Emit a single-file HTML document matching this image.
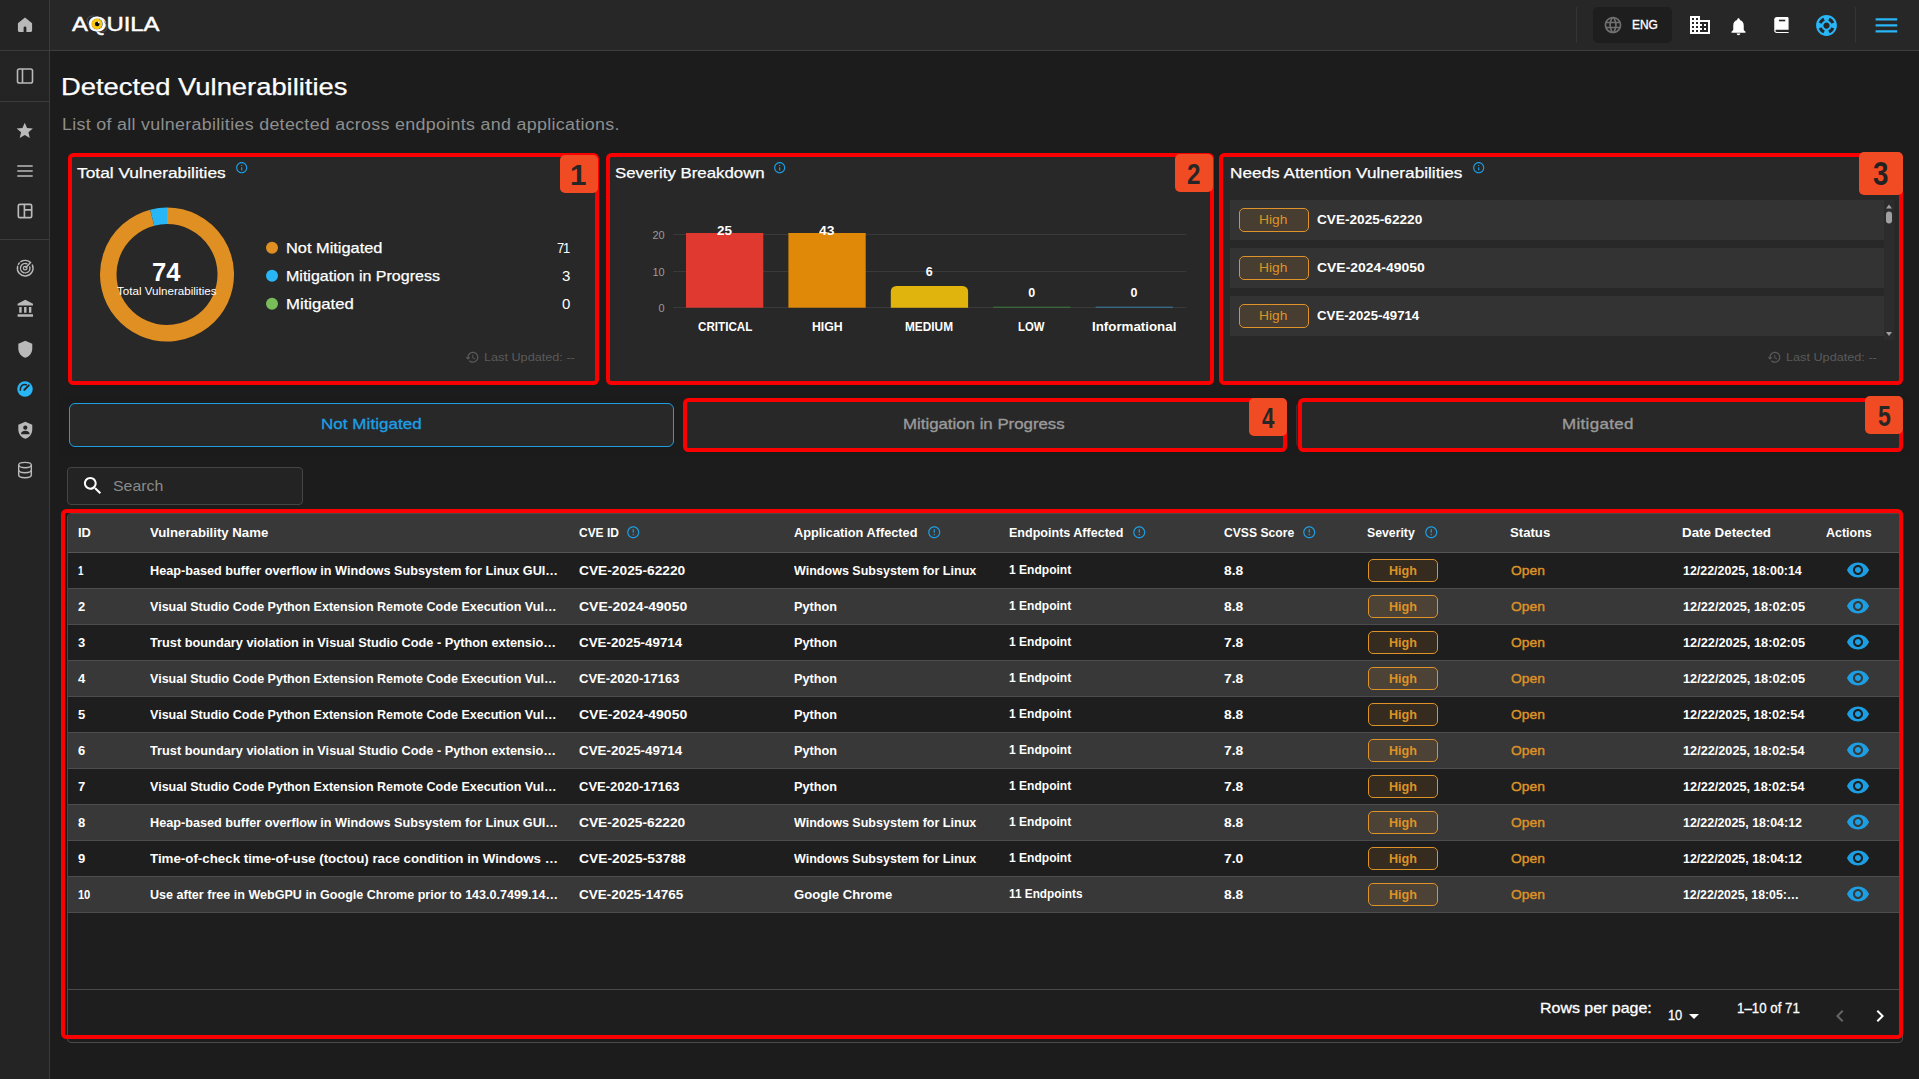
<!DOCTYPE html>
<html lang="en">
<head>
<meta charset="utf-8">
<title>Detected Vulnerabilities - AQUILA</title>
<style>
*{box-sizing:border-box;margin:0;padding:0}
html,body{width:1919px;height:1079px;overflow:hidden;background:#1c1c1c}
body{position:relative;font-family:"Liberation Sans",sans-serif;color:#fff}
.b{position:absolute}
.t{position:absolute;white-space:nowrap;line-height:1;display:block;transform-origin:0 50%}
.ic{position:absolute;display:block}
.red{border:4px solid #fb0000;border-radius:5.5px}
.badge{background:#f04b23;border-radius:5px}
.chip{border:1px solid #df9227;background:rgba(224,146,43,.12);border-radius:5px}
</style>
</head>
<body>
<main>
<section class="page-head"><span class="t" style="left:60.57px;top:74.76px;font-size:24.5px;transform:scaleX(1.1167);-webkit-text-stroke:0.25px">Detected Vulnerabilities</span><span class="t" style="left:61.67px;top:116.53px;font-size:15.8px;color:#8e8e8e;letter-spacing:0.273px;transform:scaleX(1.1300);">List of all vulnerabilities detected across endpoints and applications.</span></section>
<section class="summary-cards"><div class="b red" style="left:68px;top:153px;width:531px;height:232px;background:#282828"></div><span class="t" style="left:77.00px;top:164.88px;font-size:15.5px;transform:scaleX(1.1185);-webkit-text-stroke:0.25px">Total Vulnerabilities</span><svg class="ic" style="left:234.60px;top:161.10px;width:13.4px;height:13.4px" viewBox="0 0 24 24"><path fill="#1d9ee2" d="M11 7h2v2h-2zm0 4h2v6h-2zm1-9C6.480 2 2 6.480 2 12s4.480 10 10 10 10-4.480 10-10S17.520 2 12 2zm0 18c-4.410 0-8-3.590-8-8s3.590-8 8-8 8 3.590 8 8-3.590 8-8 8z"/></svg><svg class="ic" style="left:0;top:0;width:640px;height:400px" viewBox="0 0 640 400"><path d="M167.00 215.75A58.75 58.75 0 1 1 152.20 217.65" fill="none" stroke="#e09022" stroke-width="16.5"/><path d="M152.20 217.65A58.75 58.75 0 0 1 167.00 215.75" fill="none" stroke="#29b6f6" stroke-width="16.5"/><circle cx="272" cy="247.800" r="6" fill="#e09022"/><circle cx="272" cy="275.800" r="6" fill="#29b6f6"/><circle cx="272" cy="303.800" r="6" fill="#78bd5a"/></svg><span class="t" style="left:152.23px;top:260.09px;font-size:25px;font-weight:700;transform:scaleX(1.0222);">74</span><span class="t" style="left:117.00px;top:285.69px;font-size:11px;transform:scaleX(1.0541);">Total Vulnerabilities</span><span class="t" style="left:285.71px;top:240.47px;font-size:15px;transform:scaleX(1.0916);-webkit-text-stroke:0.25px">Not Mitigated</span><span class="t" style="left:557.00px;top:240.47px;font-size:15px;letter-spacing:-1.226px;transform:scaleX(0.8600);">71</span><span class="t" style="left:285.73px;top:268.47px;font-size:15px;transform:scaleX(1.0671);-webkit-text-stroke:0.25px">Mitigation in Progress</span><span class="t" style="left:562.00px;top:268.47px;font-size:15px;">3</span><span class="t" style="left:285.69px;top:296.47px;font-size:15px;transform:scaleX(1.1139);-webkit-text-stroke:0.25px">Mitigated</span><span class="t" style="left:562.00px;top:296.47px;font-size:15px;">0</span><svg class="ic" style="left:464.70px;top:349.70px;width:14.6px;height:14.6px" viewBox="0 0 24 24"><path fill="#5a5a5a" d="M13 3c-4.970 0-9 4.030-9 9H1l3.890 3.890.07.140L9 12H6c0-3.870 3.130-7 7-7s7 3.130 7 7-3.130 7-7 7c-1.930 0-3.680-.790-4.940-2.060l-1.420 1.420C8.270 19.990 10.510 21 13 21c4.970 0 9-4.030 9-9s-4.030-9-9-9zm-1 5v5l4.280 2.540.72-1.210-3.500-2.080V8H12z"/></svg><span class="t" style="left:484.00px;top:351.88px;font-size:11.5px;color:#5a5a5a;transform:scaleX(1.1013);">Last Updated: --</span><div class="b badge" style="left:560px;top:155px;width:38px;height:38px;"></div><span class="t" style="left:570.10px;top:159.59px;font-size:29.5px;color:#262626;font-weight:700;">1</span><div class="b red" style="left:606px;top:153px;width:608px;height:232px;background:#282828"></div><span class="t" style="left:615.00px;top:164.88px;font-size:15.5px;transform:scaleX(1.0858);-webkit-text-stroke:0.25px">Severity Breakdown</span><svg class="ic" style="left:772.80px;top:161.10px;width:13.4px;height:13.4px" viewBox="0 0 24 24"><path fill="#1d9ee2" d="M11 7h2v2h-2zm0 4h2v6h-2zm1-9C6.480 2 2 6.480 2 12s4.480 10 10 10 10-4.480 10-10S17.520 2 12 2zm0 18c-4.410 0-8-3.590-8-8s3.590-8 8-8 8 3.590 8 8-3.590 8-8 8z"/></svg><svg class="ic" style="left:600px;top:140px;width:640px;height:260px" viewBox="600 140 640 260"><rect x="673" y="234" width="513" height="1" fill="#3a3a3a"/><rect x="673" y="271" width="513" height="1" fill="#3a3a3a"/><rect x="673" y="307" width="513" height="1" fill="#3a3a3a"/><rect x="686" y="233" width="77.300" height="74.700" fill="#e03a30"/><rect x="788.400" y="233" width="77.300" height="74.700" fill="#e08808"/><path d="M890.800 307.700V291.500a5.500 5.500 0 0 1 5.500-5.500h66.300a5.500 5.500 0 0 1 5.500 5.500V307.700z" fill="#e0b40c"/><rect x="993.200" y="306.700" width="77.300" height="1" fill="#3c7a3c"/><rect x="1095.600" y="306.700" width="77.300" height="1" fill="#3d7fa6"/></svg><span class="t" style="left:652.38px;top:230.03px;font-size:11px;color:#9a9a9a;">20</span><span class="t" style="left:652.38px;top:266.63px;font-size:11px;color:#9a9a9a;">10</span><span class="t" style="left:658.50px;top:302.63px;font-size:11px;color:#9a9a9a;">0</span><span class="t" style="left:717.00px;top:225.49px;font-size:12.5px;font-weight:700;transform:scaleX(1.0751);">25</span><span class="t" style="left:819.25px;top:225.49px;font-size:12.5px;font-weight:700;transform:scaleX(1.1110);">43</span><span class="t" style="left:925.80px;top:266.49px;font-size:12.5px;font-weight:700;">6</span><span class="t" style="left:1028.20px;top:287.49px;font-size:12.5px;font-weight:700;">0</span><span class="t" style="left:1130.50px;top:287.49px;font-size:12.5px;font-weight:700;">0</span><span class="t" style="left:697.50px;top:320.84px;font-size:12px;font-weight:700;transform:scaleX(0.9701);">CRITICAL</span><span class="t" style="left:812.00px;top:320.84px;font-size:12px;font-weight:700;transform:scaleX(1.0227);">HIGH</span><span class="t" style="left:905.30px;top:320.84px;font-size:12px;font-weight:700;transform:scaleX(0.9863);">MEDIUM</span><span class="t" style="left:1018.20px;top:320.84px;font-size:12px;font-weight:700;transform:scaleX(0.9419);">LOW</span><span class="t" style="left:1092.00px;top:320.84px;font-size:12px;font-weight:700;transform:scaleX(1.1101);">Informational</span><div class="b badge" style="left:1175px;top:154px;width:38px;height:38px;"></div><span class="t" style="left:1187.03px;top:158.59px;font-size:29.5px;color:#262626;font-weight:700;transform:scaleX(0.8200);">2</span><div class="b red" style="left:1219px;top:153px;width:684px;height:232px;background:#282828"></div><span class="t" style="left:1229.69px;top:164.88px;font-size:15.5px;transform:scaleX(1.1083);-webkit-text-stroke:0.25px">Needs Attention Vulnerabilities</span><svg class="ic" style="left:1471.60px;top:161.10px;width:13.4px;height:13.4px" viewBox="0 0 24 24"><path fill="#1d9ee2" d="M11 7h2v2h-2zm0 4h2v6h-2zm1-9C6.480 2 2 6.480 2 12s4.480 10 10 10 10-4.480 10-10S17.520 2 12 2zm0 18c-4.410 0-8-3.590-8-8s3.590-8 8-8 8 3.590 8 8-3.590 8-8 8z"/></svg><div class="b" style="left:1229.5px;top:200px;width:654.5px;height:40px;background:#333"></div><div class="b chip" style="left:1239px;top:208px;width:70px;height:24px;"></div><span class="t" style="left:1258.94px;top:212.95px;font-size:13px;color:#de9226;transform:scaleX(1.0586);">High</span><span class="t" style="left:1317.00px;top:212.95px;font-size:13px;font-weight:700;transform:scaleX(1.0476);">CVE-2025-62220</span><div class="b" style="left:1229.5px;top:248px;width:654.5px;height:40px;background:#333"></div><div class="b chip" style="left:1239px;top:256px;width:70px;height:24px;"></div><span class="t" style="left:1258.94px;top:260.95px;font-size:13px;color:#de9226;transform:scaleX(1.0586);">High</span><span class="t" style="left:1317.00px;top:260.95px;font-size:13px;font-weight:700;transform:scaleX(1.0726);">CVE-2024-49050</span><div class="b" style="left:1229.5px;top:296px;width:654.5px;height:40px;background:#333"></div><div class="b chip" style="left:1239px;top:304px;width:70px;height:24px;"></div><span class="t" style="left:1258.94px;top:308.95px;font-size:13px;color:#de9226;transform:scaleX(1.0586);">High</span><span class="t" style="left:1317.00px;top:308.95px;font-size:13px;font-weight:700;transform:scaleX(1.0175);">CVE-2025-49714</span><div class="b" style="left:1884px;top:200px;width:10px;height:140px;background:#2c2c2c"></div><svg class="ic" style="left:1884px;top:200px;width:10px;height:140px" viewBox="0 0 10 140"><path d="M2 8.500L5 4.500 8 8.500z" fill="#a0a0a0"/><rect x="2" y="11.500" width="6" height="12" rx="3" fill="#a0a0a0"/><path d="M2 132L5 136 8 132z" fill="#a0a0a0"/></svg><svg class="ic" style="left:1766.70px;top:349.70px;width:14.6px;height:14.6px" viewBox="0 0 24 24"><path fill="#5a5a5a" d="M13 3c-4.970 0-9 4.030-9 9H1l3.890 3.890.07.140L9 12H6c0-3.870 3.130-7 7-7s7 3.130 7 7-3.130 7-7 7c-1.930 0-3.680-.790-4.940-2.060l-1.420 1.420C8.270 19.990 10.510 21 13 21c4.970 0 9-4.030 9-9s-4.030-9-9-9zm-1 5v5l4.280 2.540.72-1.210-3.500-2.080V8H12z"/></svg><span class="t" style="left:1786.00px;top:351.88px;font-size:11.5px;color:#5a5a5a;transform:scaleX(1.1013);">Last Updated: --</span><div class="b badge" style="left:1859px;top:152px;width:44px;height:43px;"></div><span class="t" style="left:1873.45px;top:157.62px;font-size:32.5px;color:#222;font-weight:700;transform:scaleX(0.8529);">3</span></section>
<section class="status-tabs"><div class="b" style="left:60px;top:395px;width:1850px;height:61px;background:#1b1b1b"></div><div class="b" style="left:69px;top:403px;width:605px;height:44px;background:#282828;border:1px solid #1d9ee2;border-radius:6px"></div><span class="t" style="left:320.57px;top:416.30px;font-size:15px;color:#1d9ee2;letter-spacing:0.063px;transform:scaleX(1.1300);-webkit-text-stroke:0.35px">Not Mitigated</span><div class="b red" style="left:683px;top:398px;width:604px;height:54px;background:#282828"></div><span class="t" style="left:903.38px;top:416.30px;font-size:15px;color:#9a9a9a;transform:scaleX(1.1210);-webkit-text-stroke:0.35px">Mitigation in Progress</span><div class="b badge" style="left:1249px;top:398px;width:38px;height:38px;"></div><span class="t" style="left:1261.60px;top:402.59px;font-size:29.5px;color:#262626;font-weight:700;transform:scaleX(0.7529);">4</span><div class="b" style="left:1296px;top:402px;width:10px;height:46px;background:#282828;border:1px solid #333;border-radius:6px"></div><div class="b red" style="left:1298px;top:398px;width:604.5px;height:54px;background:#282828"></div><span class="t" style="left:1561.87px;top:416.30px;font-size:15px;color:#9a9a9a;letter-spacing:0.303px;transform:scaleX(1.1300);-webkit-text-stroke:0.35px">Mitigated</span><div class="b badge" style="left:1865px;top:396px;width:38px;height:38px;"></div><span class="t" style="left:1878.05px;top:400.89px;font-size:29.5px;color:#262626;font-weight:700;transform:scaleX(0.7812);">5</span></section>
<section class="vuln-table"><div class="b" style="left:67px;top:467px;width:236px;height:38px;background:#232323;border:1px solid #454545;border-radius:4px"></div><svg class="ic" style="left:80.85px;top:474.25px;width:23.5px;height:23.5px" viewBox="0 0 24 24"><path fill="#fff" d="M15.5 14h-.79l-.28-.27C15.41 12.59 16 11.11 16 9.5 16 5.91 13.09 3 9.5 3S3 5.91 3 9.5 5.91 16 9.5 16c1.61 0 3.09-.59 4.23-1.57l.27.28v.79l5 4.99L20.49 19l-4.99-5zm-6 0C7.01 14 5 11.99 5 9.5S7.01 5 9.5 5 14 7.01 14 9.5 11.99 14 9.5 14z"/></svg><span class="t" style="left:112.80px;top:478.17px;font-size:15px;color:#8a8a8a;transform:scaleX(1.0597);">Search</span><div class="b" style="left:67px;top:513px;width:1836px;height:530px;background:#1e1e1e;border:1px solid #4a4a4a;border-radius:4px"></div><div class="b" style="left:68px;top:514px;width:1834px;height:39px;background:#383838;border-bottom:1px solid #555;border-radius:3px 3px 0 0"></div><span class="t" style="left:78.00px;top:526.15px;font-size:13px;font-weight:700;transform:scaleX(0.9911);">ID</span><span class="t" style="left:150.00px;top:526.15px;font-size:13px;font-weight:700;transform:scaleX(1.0144);">Vulnerability Name</span><span class="t" style="left:579.00px;top:526.15px;font-size:13px;font-weight:700;transform:scaleX(0.9196);">CVE ID</span><svg class="ic" style="left:626.25px;top:525.25px;width:14.5px;height:14.5px" viewBox="0 0 24 24"><path fill="#1d9ee2" d="M11 15h2v2h-2zm0-8h2v6h-2zm.990-5C6.470 2 2 6.480 2 12s4.470 10 9.990 10C17.520 22 22 17.520 22 12S17.520 2 11.990 2zM12 20c-4.420 0-8-3.580-8-8s3.580-8 8-8 8 3.580 8 8-3.580 8-8 8z"/></svg><span class="t" style="left:794.00px;top:526.15px;font-size:13px;font-weight:700;transform:scaleX(0.9806);">Application Affected</span><svg class="ic" style="left:927.25px;top:525.25px;width:14.5px;height:14.5px" viewBox="0 0 24 24"><path fill="#1d9ee2" d="M11 15h2v2h-2zm0-8h2v6h-2zm.990-5C6.470 2 2 6.480 2 12s4.470 10 9.990 10C17.520 22 22 17.520 22 12S17.520 2 11.990 2zM12 20c-4.420 0-8-3.580-8-8s3.580-8 8-8 8 3.580 8 8-3.580 8-8 8z"/></svg><span class="t" style="left:1009.00px;top:526.15px;font-size:13px;font-weight:700;transform:scaleX(0.9646);">Endpoints Affected</span><svg class="ic" style="left:1132.25px;top:525.25px;width:14.5px;height:14.5px" viewBox="0 0 24 24"><path fill="#1d9ee2" d="M11 15h2v2h-2zm0-8h2v6h-2zm.990-5C6.470 2 2 6.480 2 12s4.470 10 9.990 10C17.520 22 22 17.520 22 12S17.520 2 11.990 2zM12 20c-4.420 0-8-3.580-8-8s3.580-8 8-8 8 3.580 8 8-3.580 8-8 8z"/></svg><span class="t" style="left:1224.00px;top:526.15px;font-size:13px;font-weight:700;transform:scaleX(0.9344);">CVSS Score</span><svg class="ic" style="left:1302.25px;top:525.25px;width:14.5px;height:14.5px" viewBox="0 0 24 24"><path fill="#1d9ee2" d="M11 15h2v2h-2zm0-8h2v6h-2zm.990-5C6.470 2 2 6.480 2 12s4.470 10 9.990 10C17.520 22 22 17.520 22 12S17.520 2 11.990 2zM12 20c-4.420 0-8-3.580-8-8s3.580-8 8-8 8 3.580 8 8-3.580 8-8 8z"/></svg><span class="t" style="left:1367.00px;top:526.15px;font-size:13px;font-weight:700;transform:scaleX(0.9443);">Severity</span><svg class="ic" style="left:1424.25px;top:525.25px;width:14.5px;height:14.5px" viewBox="0 0 24 24"><path fill="#1d9ee2" d="M11 15h2v2h-2zm0-8h2v6h-2zm.990-5C6.470 2 2 6.480 2 12s4.470 10 9.990 10C17.520 22 22 17.520 22 12S17.520 2 11.990 2zM12 20c-4.420 0-8-3.580-8-8s3.580-8 8-8 8 3.580 8 8-3.580 8-8 8z"/></svg><span class="t" style="left:1510.00px;top:526.15px;font-size:13px;font-weight:700;transform:scaleX(1.0127);">Status</span><span class="t" style="left:1682.00px;top:526.15px;font-size:13px;font-weight:700;transform:scaleX(1.0259);">Date Detected</span><span class="t" style="left:1826.00px;top:526.15px;font-size:13px;font-weight:700;transform:scaleX(0.9591);">Actions</span><div class="b" style="left:68px;top:553px;width:1834px;height:36px;background:#1e1e1e;border-bottom:1px solid #4d4d4d"></div><span class="t" style="left:78.00px;top:564.15px;font-size:13px;font-weight:700;transform:scaleX(0.7571);">1</span><span class="t" style="left:150.00px;top:564.15px;font-size:13px;font-weight:700;transform:scaleX(0.9741);">Heap-based buffer overflow in Windows Subsystem for Linux GUI…</span><span class="t" style="left:579.00px;top:564.15px;font-size:13px;font-weight:700;transform:scaleX(1.0576);">CVE-2025-62220</span><span class="t" style="left:794.00px;top:564.15px;font-size:13px;font-weight:700;transform:scaleX(0.9637);">Windows Subsystem for Linux</span><span class="t" style="left:1009.00px;top:563.89px;font-size:12.5px;font-weight:700;transform:scaleX(0.9631);">1 Endpoint</span><span class="t" style="left:1224.00px;top:564.15px;font-size:13px;font-weight:700;transform:scaleX(1.0649);">8.8</span><div class="b chip" style="left:1368px;top:559px;width:70px;height:23px;"></div><span class="t" style="left:1388.50px;top:564.15px;font-size:13px;color:#de9226;font-weight:700;transform:scaleX(0.9675);">High</span><span class="t" style="left:1510.50px;top:564.05px;font-size:13.2px;color:#de9226;transform:scaleX(1.0493);-webkit-text-stroke:0.4px">Open</span><span class="t" style="left:1683.20px;top:564.15px;font-size:13px;font-weight:700;transform:scaleX(0.9553);">12/22/2025, 18:00:14</span><svg class="ic" style="left:1846.00px;top:558.00px;width:24px;height:24px" viewBox="0 0 24 24"><path fill="#1d9ee2" d="M12 4.5C7 4.5 2.73 7.61 1 12c1.73 4.39 6 7.5 11 7.5s9.27-3.11 11-7.5c-1.73-4.39-6-7.5-11-7.5zM12 17c-2.76 0-5-2.24-5-5s2.24-5 5-5 5 2.24 5 5-2.24 5-5 5zm0-8c-1.66 0-3 1.34-3 3s1.34 3 3 3 3-1.34 3-3-1.34-3-3-3z"/></svg><div class="b" style="left:68px;top:589px;width:1834px;height:36px;background:#383838;border-bottom:1px solid #4d4d4d"></div><span class="t" style="left:78.00px;top:600.15px;font-size:13px;font-weight:700;">2</span><span class="t" style="left:150.00px;top:600.15px;font-size:13px;font-weight:700;transform:scaleX(0.9652);">Visual Studio Code Python Extension Remote Code Execution Vul…</span><span class="t" style="left:579.00px;top:600.15px;font-size:13px;font-weight:700;transform:scaleX(1.0775);">CVE-2024-49050</span><span class="t" style="left:794.00px;top:600.15px;font-size:13px;font-weight:700;transform:scaleX(0.9748);">Python</span><span class="t" style="left:1009.00px;top:599.89px;font-size:12.5px;font-weight:700;transform:scaleX(0.9631);">1 Endpoint</span><span class="t" style="left:1224.00px;top:600.15px;font-size:13px;font-weight:700;transform:scaleX(1.0649);">8.8</span><div class="b chip" style="left:1368px;top:595px;width:70px;height:23px;"></div><span class="t" style="left:1388.50px;top:600.15px;font-size:13px;color:#de9226;font-weight:700;transform:scaleX(0.9675);">High</span><span class="t" style="left:1510.50px;top:600.05px;font-size:13.2px;color:#de9226;transform:scaleX(1.0493);-webkit-text-stroke:0.4px">Open</span><span class="t" style="left:1683.20px;top:600.15px;font-size:13px;font-weight:700;transform:scaleX(0.9815);">12/22/2025, 18:02:05</span><svg class="ic" style="left:1846.00px;top:594.00px;width:24px;height:24px" viewBox="0 0 24 24"><path fill="#1d9ee2" d="M12 4.5C7 4.5 2.73 7.61 1 12c1.73 4.39 6 7.5 11 7.5s9.27-3.11 11-7.5c-1.73-4.39-6-7.5-11-7.5zM12 17c-2.76 0-5-2.24-5-5s2.24-5 5-5 5 2.24 5 5-2.24 5-5 5zm0-8c-1.66 0-3 1.34-3 3s1.34 3 3 3 3-1.34 3-3-1.34-3-3-3z"/></svg><div class="b" style="left:68px;top:625px;width:1834px;height:36px;background:#1e1e1e;border-bottom:1px solid #4d4d4d"></div><span class="t" style="left:78.00px;top:636.15px;font-size:13px;font-weight:700;">3</span><span class="t" style="left:150.00px;top:636.15px;font-size:13px;font-weight:700;transform:scaleX(0.9815);">Trust boundary violation in Visual Studio Code - Python extensio…</span><span class="t" style="left:579.00px;top:636.15px;font-size:13px;font-weight:700;transform:scaleX(1.0274);">CVE-2025-49714</span><span class="t" style="left:794.00px;top:636.15px;font-size:13px;font-weight:700;transform:scaleX(0.9748);">Python</span><span class="t" style="left:1009.00px;top:635.89px;font-size:12.5px;font-weight:700;transform:scaleX(0.9631);">1 Endpoint</span><span class="t" style="left:1224.00px;top:636.15px;font-size:13px;font-weight:700;transform:scaleX(1.0649);">7.8</span><div class="b chip" style="left:1368px;top:631px;width:70px;height:23px;"></div><span class="t" style="left:1388.50px;top:636.15px;font-size:13px;color:#de9226;font-weight:700;transform:scaleX(0.9675);">High</span><span class="t" style="left:1510.50px;top:636.05px;font-size:13.2px;color:#de9226;transform:scaleX(1.0493);-webkit-text-stroke:0.4px">Open</span><span class="t" style="left:1683.20px;top:636.15px;font-size:13px;font-weight:700;transform:scaleX(0.9815);">12/22/2025, 18:02:05</span><svg class="ic" style="left:1846.00px;top:630.00px;width:24px;height:24px" viewBox="0 0 24 24"><path fill="#1d9ee2" d="M12 4.5C7 4.5 2.73 7.61 1 12c1.73 4.39 6 7.5 11 7.5s9.27-3.11 11-7.5c-1.73-4.39-6-7.5-11-7.5zM12 17c-2.76 0-5-2.24-5-5s2.24-5 5-5 5 2.24 5 5-2.24 5-5 5zm0-8c-1.66 0-3 1.34-3 3s1.34 3 3 3 3-1.34 3-3-1.34-3-3-3z"/></svg><div class="b" style="left:68px;top:661px;width:1834px;height:36px;background:#383838;border-bottom:1px solid #4d4d4d"></div><span class="t" style="left:78.00px;top:672.15px;font-size:13px;font-weight:700;">4</span><span class="t" style="left:150.00px;top:672.15px;font-size:13px;font-weight:700;transform:scaleX(0.9652);">Visual Studio Code Python Extension Remote Code Execution Vul…</span><span class="t" style="left:579.00px;top:672.15px;font-size:13px;font-weight:700;">CVE-2020-17163</span><span class="t" style="left:794.00px;top:672.15px;font-size:13px;font-weight:700;transform:scaleX(0.9748);">Python</span><span class="t" style="left:1009.00px;top:671.89px;font-size:12.5px;font-weight:700;transform:scaleX(0.9631);">1 Endpoint</span><span class="t" style="left:1224.00px;top:672.15px;font-size:13px;font-weight:700;transform:scaleX(1.0649);">7.8</span><div class="b chip" style="left:1368px;top:667px;width:70px;height:23px;"></div><span class="t" style="left:1388.50px;top:672.15px;font-size:13px;color:#de9226;font-weight:700;transform:scaleX(0.9675);">High</span><span class="t" style="left:1510.50px;top:672.05px;font-size:13.2px;color:#de9226;transform:scaleX(1.0493);-webkit-text-stroke:0.4px">Open</span><span class="t" style="left:1683.20px;top:672.15px;font-size:13px;font-weight:700;transform:scaleX(0.9815);">12/22/2025, 18:02:05</span><svg class="ic" style="left:1846.00px;top:666.00px;width:24px;height:24px" viewBox="0 0 24 24"><path fill="#1d9ee2" d="M12 4.5C7 4.5 2.73 7.61 1 12c1.73 4.39 6 7.5 11 7.5s9.27-3.11 11-7.5c-1.73-4.39-6-7.5-11-7.5zM12 17c-2.76 0-5-2.24-5-5s2.24-5 5-5 5 2.24 5 5-2.24 5-5 5zm0-8c-1.66 0-3 1.34-3 3s1.34 3 3 3 3-1.34 3-3-1.34-3-3-3z"/></svg><div class="b" style="left:68px;top:697px;width:1834px;height:36px;background:#1e1e1e;border-bottom:1px solid #4d4d4d"></div><span class="t" style="left:78.00px;top:708.15px;font-size:13px;font-weight:700;">5</span><span class="t" style="left:150.00px;top:708.15px;font-size:13px;font-weight:700;transform:scaleX(0.9652);">Visual Studio Code Python Extension Remote Code Execution Vul…</span><span class="t" style="left:579.00px;top:708.15px;font-size:13px;font-weight:700;transform:scaleX(1.0775);">CVE-2024-49050</span><span class="t" style="left:794.00px;top:708.15px;font-size:13px;font-weight:700;transform:scaleX(0.9748);">Python</span><span class="t" style="left:1009.00px;top:707.89px;font-size:12.5px;font-weight:700;transform:scaleX(0.9631);">1 Endpoint</span><span class="t" style="left:1224.00px;top:708.15px;font-size:13px;font-weight:700;transform:scaleX(1.0649);">8.8</span><div class="b chip" style="left:1368px;top:703px;width:70px;height:23px;"></div><span class="t" style="left:1388.50px;top:708.15px;font-size:13px;color:#de9226;font-weight:700;transform:scaleX(0.9675);">High</span><span class="t" style="left:1510.50px;top:708.05px;font-size:13.2px;color:#de9226;transform:scaleX(1.0493);-webkit-text-stroke:0.4px">Open</span><span class="t" style="left:1683.20px;top:708.15px;font-size:13px;font-weight:700;transform:scaleX(0.9769);">12/22/2025, 18:02:54</span><svg class="ic" style="left:1846.00px;top:702.00px;width:24px;height:24px" viewBox="0 0 24 24"><path fill="#1d9ee2" d="M12 4.5C7 4.5 2.73 7.61 1 12c1.73 4.39 6 7.5 11 7.5s9.27-3.11 11-7.5c-1.73-4.39-6-7.5-11-7.5zM12 17c-2.76 0-5-2.24-5-5s2.24-5 5-5 5 2.24 5 5-2.24 5-5 5zm0-8c-1.66 0-3 1.34-3 3s1.34 3 3 3 3-1.34 3-3-1.34-3-3-3z"/></svg><div class="b" style="left:68px;top:733px;width:1834px;height:36px;background:#383838;border-bottom:1px solid #4d4d4d"></div><span class="t" style="left:78.00px;top:744.15px;font-size:13px;font-weight:700;">6</span><span class="t" style="left:150.00px;top:744.15px;font-size:13px;font-weight:700;transform:scaleX(0.9815);">Trust boundary violation in Visual Studio Code - Python extensio…</span><span class="t" style="left:579.00px;top:744.15px;font-size:13px;font-weight:700;transform:scaleX(1.0274);">CVE-2025-49714</span><span class="t" style="left:794.00px;top:744.15px;font-size:13px;font-weight:700;transform:scaleX(0.9748);">Python</span><span class="t" style="left:1009.00px;top:743.89px;font-size:12.5px;font-weight:700;transform:scaleX(0.9631);">1 Endpoint</span><span class="t" style="left:1224.00px;top:744.15px;font-size:13px;font-weight:700;transform:scaleX(1.0649);">7.8</span><div class="b chip" style="left:1368px;top:739px;width:70px;height:23px;"></div><span class="t" style="left:1388.50px;top:744.15px;font-size:13px;color:#de9226;font-weight:700;transform:scaleX(0.9675);">High</span><span class="t" style="left:1510.50px;top:744.05px;font-size:13.2px;color:#de9226;transform:scaleX(1.0493);-webkit-text-stroke:0.4px">Open</span><span class="t" style="left:1683.20px;top:744.15px;font-size:13px;font-weight:700;transform:scaleX(0.9769);">12/22/2025, 18:02:54</span><svg class="ic" style="left:1846.00px;top:738.00px;width:24px;height:24px" viewBox="0 0 24 24"><path fill="#1d9ee2" d="M12 4.5C7 4.5 2.73 7.61 1 12c1.73 4.39 6 7.5 11 7.5s9.27-3.11 11-7.5c-1.73-4.39-6-7.5-11-7.5zM12 17c-2.76 0-5-2.24-5-5s2.24-5 5-5 5 2.24 5 5-2.24 5-5 5zm0-8c-1.66 0-3 1.34-3 3s1.34 3 3 3 3-1.34 3-3-1.34-3-3-3z"/></svg><div class="b" style="left:68px;top:769px;width:1834px;height:36px;background:#1e1e1e;border-bottom:1px solid #4d4d4d"></div><span class="t" style="left:78.00px;top:780.15px;font-size:13px;font-weight:700;">7</span><span class="t" style="left:150.00px;top:780.15px;font-size:13px;font-weight:700;transform:scaleX(0.9652);">Visual Studio Code Python Extension Remote Code Execution Vul…</span><span class="t" style="left:579.00px;top:780.15px;font-size:13px;font-weight:700;">CVE-2020-17163</span><span class="t" style="left:794.00px;top:780.15px;font-size:13px;font-weight:700;transform:scaleX(0.9748);">Python</span><span class="t" style="left:1009.00px;top:779.89px;font-size:12.5px;font-weight:700;transform:scaleX(0.9631);">1 Endpoint</span><span class="t" style="left:1224.00px;top:780.15px;font-size:13px;font-weight:700;transform:scaleX(1.0649);">7.8</span><div class="b chip" style="left:1368px;top:775px;width:70px;height:23px;"></div><span class="t" style="left:1388.50px;top:780.15px;font-size:13px;color:#de9226;font-weight:700;transform:scaleX(0.9675);">High</span><span class="t" style="left:1510.50px;top:780.05px;font-size:13.2px;color:#de9226;transform:scaleX(1.0493);-webkit-text-stroke:0.4px">Open</span><span class="t" style="left:1683.20px;top:780.15px;font-size:13px;font-weight:700;transform:scaleX(0.9769);">12/22/2025, 18:02:54</span><svg class="ic" style="left:1846.00px;top:774.00px;width:24px;height:24px" viewBox="0 0 24 24"><path fill="#1d9ee2" d="M12 4.5C7 4.5 2.73 7.61 1 12c1.73 4.39 6 7.5 11 7.5s9.27-3.11 11-7.5c-1.73-4.39-6-7.5-11-7.5zM12 17c-2.76 0-5-2.24-5-5s2.24-5 5-5 5 2.24 5 5-2.24 5-5 5zm0-8c-1.66 0-3 1.34-3 3s1.34 3 3 3 3-1.34 3-3-1.34-3-3-3z"/></svg><div class="b" style="left:68px;top:805px;width:1834px;height:36px;background:#383838;border-bottom:1px solid #4d4d4d"></div><span class="t" style="left:78.00px;top:816.15px;font-size:13px;font-weight:700;">8</span><span class="t" style="left:150.00px;top:816.15px;font-size:13px;font-weight:700;transform:scaleX(0.9741);">Heap-based buffer overflow in Windows Subsystem for Linux GUI…</span><span class="t" style="left:579.00px;top:816.15px;font-size:13px;font-weight:700;transform:scaleX(1.0576);">CVE-2025-62220</span><span class="t" style="left:794.00px;top:816.15px;font-size:13px;font-weight:700;transform:scaleX(0.9637);">Windows Subsystem for Linux</span><span class="t" style="left:1009.00px;top:815.89px;font-size:12.5px;font-weight:700;transform:scaleX(0.9631);">1 Endpoint</span><span class="t" style="left:1224.00px;top:816.15px;font-size:13px;font-weight:700;transform:scaleX(1.0649);">8.8</span><div class="b chip" style="left:1368px;top:811px;width:70px;height:23px;"></div><span class="t" style="left:1388.50px;top:816.15px;font-size:13px;color:#de9226;font-weight:700;transform:scaleX(0.9675);">High</span><span class="t" style="left:1510.50px;top:816.05px;font-size:13.2px;color:#de9226;transform:scaleX(1.0493);-webkit-text-stroke:0.4px">Open</span><span class="t" style="left:1683.20px;top:816.15px;font-size:13px;font-weight:700;transform:scaleX(0.9573);">12/22/2025, 18:04:12</span><svg class="ic" style="left:1846.00px;top:810.00px;width:24px;height:24px" viewBox="0 0 24 24"><path fill="#1d9ee2" d="M12 4.5C7 4.5 2.73 7.61 1 12c1.73 4.39 6 7.5 11 7.5s9.27-3.11 11-7.5c-1.73-4.39-6-7.5-11-7.5zM12 17c-2.76 0-5-2.24-5-5s2.24-5 5-5 5 2.24 5 5-2.24 5-5 5zm0-8c-1.66 0-3 1.34-3 3s1.34 3 3 3 3-1.34 3-3-1.34-3-3-3z"/></svg><div class="b" style="left:68px;top:841px;width:1834px;height:36px;background:#1e1e1e;border-bottom:1px solid #4d4d4d"></div><span class="t" style="left:78.00px;top:852.15px;font-size:13px;font-weight:700;">9</span><span class="t" style="left:150.00px;top:852.15px;font-size:13px;font-weight:700;transform:scaleX(1.0243);">Time-of-check time-of-use (toctou) race condition in Windows …</span><span class="t" style="left:579.00px;top:852.15px;font-size:13px;font-weight:700;transform:scaleX(1.0626);">CVE-2025-53788</span><span class="t" style="left:794.00px;top:852.15px;font-size:13px;font-weight:700;transform:scaleX(0.9637);">Windows Subsystem for Linux</span><span class="t" style="left:1009.00px;top:851.89px;font-size:12.5px;font-weight:700;transform:scaleX(0.9631);">1 Endpoint</span><span class="t" style="left:1224.00px;top:852.15px;font-size:13px;font-weight:700;transform:scaleX(1.0649);">7.0</span><div class="b chip" style="left:1368px;top:847px;width:70px;height:23px;"></div><span class="t" style="left:1388.50px;top:852.15px;font-size:13px;color:#de9226;font-weight:700;transform:scaleX(0.9675);">High</span><span class="t" style="left:1510.50px;top:852.05px;font-size:13.2px;color:#de9226;transform:scaleX(1.0493);-webkit-text-stroke:0.4px">Open</span><span class="t" style="left:1683.20px;top:852.15px;font-size:13px;font-weight:700;transform:scaleX(0.9573);">12/22/2025, 18:04:12</span><svg class="ic" style="left:1846.00px;top:846.00px;width:24px;height:24px" viewBox="0 0 24 24"><path fill="#1d9ee2" d="M12 4.5C7 4.5 2.73 7.61 1 12c1.73 4.39 6 7.5 11 7.5s9.27-3.11 11-7.5c-1.73-4.39-6-7.5-11-7.5zM12 17c-2.76 0-5-2.24-5-5s2.24-5 5-5 5 2.24 5 5-2.24 5-5 5zm0-8c-1.66 0-3 1.34-3 3s1.34 3 3 3 3-1.34 3-3-1.34-3-3-3z"/></svg><div class="b" style="left:68px;top:877px;width:1834px;height:36px;background:#383838;border-bottom:1px solid #4d4d4d"></div><span class="t" style="left:78.00px;top:888.15px;font-size:13px;font-weight:700;letter-spacing:-0.276px;transform:scaleX(0.8600);">10</span><span class="t" style="left:150.00px;top:888.15px;font-size:13px;font-weight:700;transform:scaleX(0.9659);">Use after free in WebGPU in Google Chrome prior to 143.0.7499.14…</span><span class="t" style="left:579.00px;top:888.15px;font-size:13px;font-weight:700;transform:scaleX(1.0376);">CVE-2025-14765</span><span class="t" style="left:794.00px;top:888.15px;font-size:13px;font-weight:700;transform:scaleX(1.0074);">Google Chrome</span><span class="t" style="left:1009.00px;top:887.89px;font-size:12.5px;font-weight:700;transform:scaleX(0.9443);">11 Endpoints</span><span class="t" style="left:1224.00px;top:888.15px;font-size:13px;font-weight:700;transform:scaleX(1.0649);">8.8</span><div class="b chip" style="left:1368px;top:883px;width:70px;height:23px;"></div><span class="t" style="left:1388.50px;top:888.15px;font-size:13px;color:#de9226;font-weight:700;transform:scaleX(0.9675);">High</span><span class="t" style="left:1510.50px;top:888.05px;font-size:13.2px;color:#de9226;transform:scaleX(1.0493);-webkit-text-stroke:0.4px">Open</span><span class="t" style="left:1683.20px;top:888.15px;font-size:13px;font-weight:700;transform:scaleX(0.9453);">12/22/2025, 18:05:…</span><svg class="ic" style="left:1846.00px;top:882.00px;width:24px;height:24px" viewBox="0 0 24 24"><path fill="#1d9ee2" d="M12 4.5C7 4.5 2.73 7.61 1 12c1.73 4.39 6 7.5 11 7.5s9.27-3.11 11-7.5c-1.73-4.39-6-7.5-11-7.5zM12 17c-2.76 0-5-2.24-5-5s2.24-5 5-5 5 2.24 5 5-2.24 5-5 5zm0-8c-1.66 0-3 1.34-3 3s1.34 3 3 3 3-1.34 3-3-1.34-3-3-3z"/></svg><div class="b" style="left:68px;top:989px;width:1834px;height:1px;background:#4a4a4a"></div><span class="t" style="left:1539.94px;top:1000.30px;font-size:15px;transform:scaleX(1.0633);-webkit-text-stroke:0.3px">Rows per page:</span><span class="t" style="left:1667.84px;top:1007.30px;font-size:15px;letter-spacing:-0.226px;transform:scaleX(0.8600);-webkit-text-stroke:0.3px">10</span><svg class="ic" style="left:1681.50px;top:1004.00px;width:24px;height:24px" viewBox="0 0 24 24"><path fill="#fff" d="M7 10l5 5 5-5z"/></svg><span class="t" style="left:1737.11px;top:1000.30px;font-size:15px;transform:scaleX(0.8856);-webkit-text-stroke:0.3px">1–10 of 71</span><svg class="ic" style="left:1828.00px;top:1003.50px;width:24px;height:24px" viewBox="0 0 24 24"><path fill="#666" d="M15.410 7.410L14 6l-6 6 6 6 1.410-1.410L10.830 12z"/></svg><svg class="ic" style="left:1868.00px;top:1003.50px;width:24px;height:24px" viewBox="0 0 24 24"><path fill="#fff" d="M10 6L8.590 7.410 13.170 12l-4.580 4.590L10 18l6-6z"/></svg><div class="b red" style="left:61px;top:509px;width:1842px;height:530px;"></div></section>
</main>
<header><div class="b" style="left:50px;top:0px;width:1869px;height:51px;background:#272727;border-bottom:1px solid #3d3d3d"></div><span class="t" style="left:71.70px;top:14.27px;font-size:20px;transform:scaleX(1.1929);-webkit-text-stroke:0.45px">AQUILA</span><svg class="ic" style="left:85.00px;top:11.80px;width:24px;height:24px" viewBox="0 0 24 24"><ellipse cx="12" cy="12" rx="11" ry="6.500" transform="rotate(32 12 12)" fill="none" stroke="#5a5a5a" stroke-width="0.700"/><circle cx="12" cy="12" r="6.700" fill="none" stroke="#fff" stroke-width="1.600"/><circle cx="12" cy="12" r="5.400" fill="#f6c915"/><circle cx="12.200" cy="12" r="2.300" fill="#0a0a0a"/><circle cx="13.700" cy="10.400" r="0.800" fill="#fff"/></svg><div class="b" style="left:1575.5px;top:7px;width:1px;height:36px;background:#343434"></div><div class="b" style="left:1593px;top:7px;width:79px;height:36px;background:#1e1e1e;border-radius:5px"></div><svg class="ic" style="left:1603.00px;top:15.00px;width:20px;height:20px" viewBox="0 0 24 24"><path fill="#707070" d="M11.99 2C6.47 2 2 6.48 2 12s4.47 10 9.99 10C17.52 22 22 17.52 22 12S17.52 2 11.99 2zm6.93 6h-2.95c-.32-1.25-.78-2.45-1.38-3.56 1.84.63 3.37 1.91 4.33 3.56zM12 4.04c.83 1.2 1.48 2.53 1.91 3.96h-3.82c.43-1.43 1.08-2.76 1.91-3.96zM4.26 14C4.1 13.36 4 12.69 4 12s.1-1.36.26-2h3.38c-.08.66-.14 1.32-.14 2 0 .68.06 1.34.14 2H4.26zm.82 2h2.95c.32 1.25.78 2.45 1.38 3.56-1.84-.63-3.37-1.9-4.33-3.56zm2.95-8H5.08c.96-1.66 2.49-2.93 4.33-3.56C8.81 5.55 8.35 6.75 8.03 8zM12 19.96c-.83-1.2-1.48-2.53-1.91-3.96h3.82c-.43 1.43-1.08 2.76-1.91 3.96zM14.34 14H9.66c-.09-.66-.16-1.32-.16-2 0-.68.07-1.35.16-2h4.68c.09.65.16 1.32.16 2 0 .68-.07 1.34-.16 2zm.25 5.56c.6-1.11 1.06-2.31 1.38-3.56h2.95c-.96 1.65-2.49 2.93-4.33 3.56zM16.36 14c.08-.66.14-1.32.14-2 0-.68-.06-1.34-.14-2h3.38c.16.64.26 1.31.26 2s-.1 1.36-.26 2h-3.38z"/></svg><span class="t" style="left:1632.27px;top:18.55px;font-size:12.8px;transform:scaleX(0.9311);-webkit-text-stroke:0.35px">ENG</span><svg class="ic" style="left:1688.00px;top:13.00px;width:24px;height:24px" viewBox="0 0 24 24"><path fill="#fff" d="M12 7V3H2v18h20V7H12zM6 19H4v-2h2v2zm0-4H4v-2h2v2zm0-4H4V9h2v2zm0-4H4V5h2v2zm4 12H8v-2h2v2zm0-4H8v-2h2v2zm0-4H8V9h2v2zm0-4H8V5h2v2zm10 12h-8v-2h2v-2h-2v-2h2v-2h-2V9h8v10zm-2-8h-2v2h2v-2zm0 4h-2v2h2v-2z"/></svg><svg class="ic" style="left:1727.70px;top:15.50px;width:21px;height:21px" viewBox="0 0 24 24"><path fill="#fff" d="M12 22c1.1 0 2-.9 2-2h-4c0 1.1.89 2 2 2zm6-6v-5c0-3.07-1.64-5.64-4.5-6.32V4c0-.83-.67-1.5-1.5-1.5s-1.5.67-1.5 1.5v.68C7.63 5.36 6 7.92 6 11v5l-2 2v1h16v-1l-2-2z"/></svg><svg class="ic" style="left:1772.20px;top:15.00px;width:20px;height:20px" viewBox="0 0 24 24"><path fill="#fff" d="M5.800 2.300h12.400c1 0 1.700.700 1.700 1.700v13.600H5.600c-.900 0-1.500.600-1.500 1.400s.600 1.400 1.500 1.400h14.300v1.300H5.600c-1.600 0-2.900-1.200-2.900-2.700V5.200c0-1.600 1.400-2.900 3.100-2.900z"/><rect x="8.300" y="5.600" width="7.600" height="2" fill="#282828"/></svg><svg class="ic" style="left:1814.10px;top:13.00px;width:25px;height:25px" viewBox="0 0 24 24"><path fill="#29b6f6" d="M12 2C6.480 2 2 6.480 2 12s4.480 10 10 10 10-4.480 10-10S17.520 2 12 2zm7.460 7.120l-2.780 1.150c-.510-1.360-1.580-2.440-2.950-2.940l1.150-2.780c2.100.8 3.770 2.470 4.580 4.570zM12 15c-1.660 0-3-1.340-3-3s1.340-3 3-3 3 1.340 3 3-1.340 3-3 3zM9.130 4.540l1.170 2.780c-1.380.5-2.470 1.590-2.980 2.970L4.540 9.130c.810-2.110 2.480-3.780 4.590-4.590zM4.540 14.870l2.780-1.150c.510 1.380 1.590 2.460 2.970 2.960l-1.170 2.780c-2.100-.810-3.770-2.480-4.580-4.590zm10.340 4.590l-1.150-2.780c1.370-.510 2.450-1.590 2.950-2.970l2.780 1.170c-.810 2.100-2.480 3.770-4.580 4.580z"/></svg><div class="b" style="left:1855px;top:7px;width:1px;height:36px;background:#343434"></div><svg class="ic" style="left:1871.60px;top:10.60px;width:28.8px;height:28.8px" viewBox="0 0 24 24"><path fill="#29b6f6" d="M3 18h18v-2H3v2zm0-5h18v-2H3v2zm0-7v2h18V6H3z"/></svg></header>
<nav><div class="b" style="left:0px;top:0px;width:50px;height:1079px;background:#242424;border-right:1px solid #3b3b3b"></div><div class="b" style="left:0px;top:50px;width:49px;height:1px;background:#3b3b3b"></div><div class="b" style="left:0px;top:101px;width:49px;height:1px;background:#3b3b3b"></div><div class="b" style="left:0px;top:239px;width:49px;height:1px;background:#3b3b3b"></div><svg class="ic" style="left:15.00px;top:15.00px;width:20px;height:20px" viewBox="0 0 20 20"><path fill="#b9b9b9" d="M10 2.600L17.100 8.200V15.600a1.300 1.300 0 0 1-1.300 1.300H11.400V12.800a1.400 1.400 0 0 0-2.800 0V16.900H4.200a1.300 1.300 0 0 1-1.300-1.300V8.200z"/></svg><svg class="ic" style="left:15.00px;top:65.50px;width:20px;height:20px" viewBox="0 0 24 24"><rect x="3" y="3.6" width="18" height="16.8" rx="2.2" fill="none" stroke="#b9b9b9" stroke-width="1.9"/><path d="M9 3.6v16.8" stroke="#b9b9b9" stroke-width="1.9"/></svg><svg class="ic" style="left:15.25px;top:120.75px;width:19.5px;height:19.5px" viewBox="0 0 24 24"><path fill="#b9b9b9" d="M12 17.27L18.18 21l-1.64-7.03L22 9.24l-7.19-.61L12 2 9.19 8.63 2 9.24l5.46 4.73L5.82 21z"/></svg><svg class="ic" style="left:15.00px;top:160.80px;width:20px;height:20px" viewBox="0 0 20 20"><path d="M2.300 4.900h15.400M2.300 10h15.400M2.300 15.100h15.400" stroke="#b9b9b9" stroke-width="1.500" fill="none"/></svg><svg class="ic" style="left:15.00px;top:201.20px;width:20px;height:20px" viewBox="0 0 24 24"><rect x="4" y="4" width="16" height="16" rx="1.8" fill="none" stroke="#b9b9b9" stroke-width="2"/><path d="M11.3 4v16M11.3 10.6H20" stroke="#b9b9b9" stroke-width="2" fill="none"/></svg><svg class="ic" style="left:14.80px;top:257.80px;width:20.4px;height:20.4px" viewBox="0 0 24 24"><path d="M20.40 8.26A9.2 9.2 0 1 1 3.07 9.77M4.03 7.40A9.2 9.2 0 0 1 5.06 5.96M6.86 4.37A9.2 9.2 0 0 1 18.39 5.38M17.41 10.55A5.6 5.6 0 0 1 13.92 17.26M10.08 17.26A5.6 5.6 0 0 1 13.92 6.74M12.800 11.200L18.400 5.300" fill="none" stroke="#b9b9b9" stroke-width="1.700" stroke-linecap="round"/><circle cx="12" cy="12" r="2.100" fill="none" stroke="#b9b9b9" stroke-width="1.500"/><path d="M11.300 17.400h1.400" stroke="#b9b9b9" stroke-width="1.500" stroke-linecap="round"/></svg><svg class="ic" style="left:15.60px;top:298.90px;width:19.4px;height:19.4px" viewBox="0 0 24 24"><path fill="#b9b9b9" d="M4 10v7h3v-7H4zm6 0v7h3v-7h-3zM2 22h19v-3H2v3zm14-12v7h3v-7h-3zm-4.500-9L2 6v2h19V6l-9.500-5z"/></svg><svg class="ic" style="left:15.70px;top:339.70px;width:18.6px;height:18.6px" viewBox="0 0 24 24"><path fill="#b9b9b9" d="M12 1L3 5v6c0 5.550 3.840 10.740 9 12 5.160-1.260 9-6.450 9-12V5l-9-4z"/></svg><svg class="ic" style="left:15.00px;top:378.80px;width:20px;height:20px" viewBox="0 0 24 24"><circle cx="12" cy="12" r="9.300" fill="#29b6f6"/><path d="M6.400 13.300A5.700 5.700 0 0 1 13.600 6.800" fill="none" stroke="#252525" stroke-width="1.900" stroke-linecap="round"/><path d="M11.200 13.100L16.600 7.600" stroke="#252525" stroke-width="2.300" stroke-linecap="round"/></svg><svg class="ic" style="left:15.70px;top:420.70px;width:18.6px;height:18.6px" viewBox="0 0 24 24"><path fill="#b9b9b9" d="M12 1L3 5v6c0 5.550 3.840 10.740 9 12 5.160-1.260 9-6.450 9-12V5l-9-4z"/><circle cx="12" cy="8.600" r="2.700" fill="#252525"/><path d="M6.600 16.200c0-2.400 3.600-3.500 5.400-3.500s5.400 1.100 5.400 3.500v.800H6.600z" fill="#252525"/></svg><svg class="ic" style="left:15.00px;top:460.00px;width:20px;height:20px" viewBox="0 0 24 24"><g fill="none" stroke="#b9b9b9" stroke-width="1.700"><ellipse cx="12" cy="6" rx="7.600" ry="3.200"/><path d="M4.400 6v12c0 1.770 3.400 3.200 7.600 3.200s7.600-1.430 7.600-3.200V6"/><path d="M4.400 12c0 1.770 3.400 3.200 7.600 3.200s7.600-1.430 7.600-3.200"/></g></svg></nav>
</body>
</html>
